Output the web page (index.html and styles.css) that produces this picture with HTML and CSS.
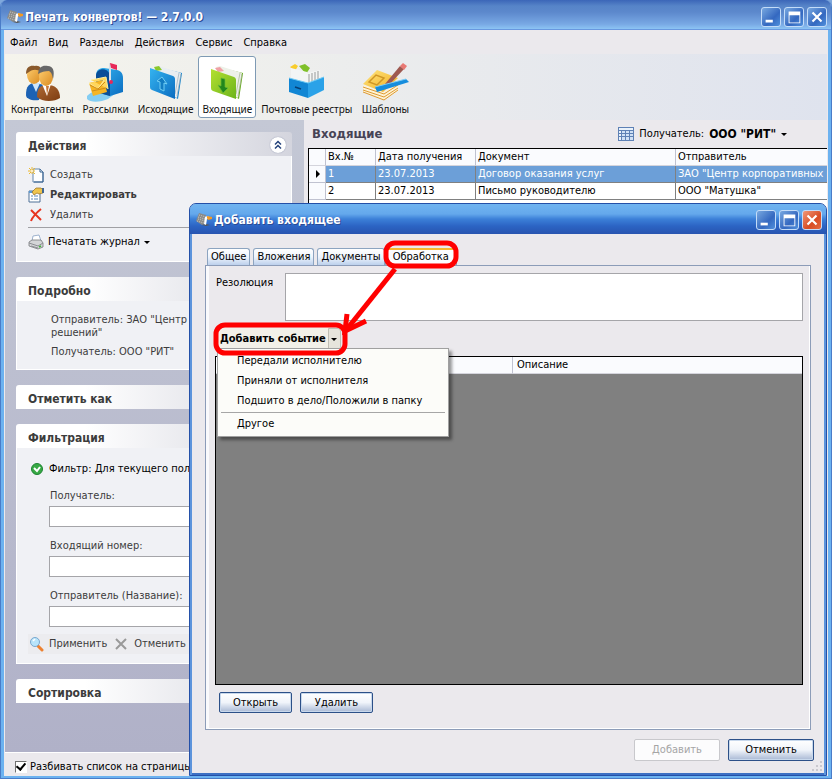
FILE: index.html
```html
<!DOCTYPE html>
<html lang="ru">
<head>
<meta charset="utf-8">
<title>Печать конвертов!</title>
<link rel="stylesheet" href="styles.css">
</head>
<body>
<svg class="defs" aria-hidden="true">
  <defs>
    <linearGradient id="gBlue" x1="0" y1="0" x2="1" y2="1"><stop offset="0" stop-color="#35b4f0"/><stop offset="1" stop-color="#0a6cc0"/></linearGradient>
    <linearGradient id="gGreen" x1="0" y1="0" x2="1" y2="1"><stop offset="0" stop-color="#b4e030"/><stop offset="1" stop-color="#6cb41c"/></linearGradient>
    <linearGradient id="gSkin" x1="0" y1="0" x2="1" y2="1"><stop offset="0" stop-color="#ffcf70"/><stop offset="1" stop-color="#d98a20"/></linearGradient>
    <linearGradient id="gBrown" x1="0" y1="0" x2="1" y2="1"><stop offset="0" stop-color="#b06a34"/><stop offset="1" stop-color="#7c3c12"/></linearGradient>
    <linearGradient id="gYellow" x1="0" y1="0" x2="1" y2="1"><stop offset="0" stop-color="#ffe680"/><stop offset="1" stop-color="#f2ac1c"/></linearGradient>
    <symbol id="app" viewBox="0 0 16 16">
      <path d="M3 1l7 2-1 9-3 1-6-4z" fill="#8a8a88"/>
      <path d="M3 3l7 2M2 5l7 2M2 7l7 2M1 9l7 2" stroke="#d4d4d0" stroke-width=".8" stroke-dasharray="1 1" fill="none"/>
      <path d="M6 13l4-1 4 1-4 1z" fill="#555"/>
      <path d="M9 5l3-1 1 2-2 1-1 6-2-1z" fill="#fff"/>
      <path d="M11 4l5 1v2l-4 1-1-2z" fill="#f59a22"/>
    </symbol>
  </defs>
</svg>

<div class="window">
  <header class="titlebar">
    <svg class="app-icon"><use href="#app"/></svg>
    <h1>Печать конвертов! — 2.7.0.0</h1>
    <div class="controls">
      <button type="button" aria-label="Свернуть"><svg viewBox="0 0 20 20"><path d="M4 13h8v3H4z" fill="#fff"/></svg></button>
      <button type="button" aria-label="Развернуть"><svg viewBox="0 0 20 20"><path d="M4 4h13v13H4zM5 8v8h11V8z" fill="#fff" fill-rule="evenodd"/></svg></button>
      <button type="button" aria-label="Закрыть"><svg viewBox="0 0 20 20"><path d="M5 5l10 10M15 5L5 15" stroke="#fff" stroke-width="2.4"/></svg></button>
    </div>
  </header>

  <nav class="menubar">
    <button type="button">Файл</button><button type="button">Вид</button><button type="button">Разделы</button><button type="button">Действия</button><button type="button">Сервис</button><button type="button">Справка</button>
  </nav>

  <div class="toolbar">
    <button type="button">
      <svg viewBox="0 0 40 40">
        <path d="M4 33c0-9 3-12 10-12l8 2-5 15c-7 1-13-1-13-5z" fill="#1c62b4"/>
        <path d="M10 21l4 9 4-9z" fill="#cfe6fa"/>
        <ellipse cx="12" cy="13" rx="7" ry="9" fill="url(#gSkin)"/>
        <path d="M4 12C4 4 9 3 13 4c5-1 7 3 6 6-4-3-8-3-12 0z" fill="#8a5a2c"/>
        <path d="M15 35c0-10 4-12 11-12s12 4 12 13c-6 4-18 4-23-1z" fill="url(#gBrown)"/>
        <path d="M20 22l5 12 4-12z" fill="#fff"/><path d="M24 24l1 9 2-9z" fill="#c87838"/>
        <ellipse cx="24" cy="15" rx="7" ry="9" fill="url(#gSkin)"/>
        <path d="M16 12C17 4 21 3 26 4c5 0 7 5 5 13-1-4-1-6-4-8-4 0-8 1-11 3z" fill="#686868"/>
      </svg>
      <span>Контрагенты</span>
    </button>
    <button type="button">
      <svg viewBox="0 0 40 40">
        <path d="M1 34c4-3 10-8 16-7l13 4-8 6c-7 3-17 4-21 0z" fill="#84cdf2"/>
        <path d="M10 24V14c0-6 3-8 8-8l13 2c5 1 6 5 6 8v14l-13 4-14-4z" fill="url(#gBlue)"/>
        <path d="M10 24V14c0-9 14-9 14 1v19l-14-4z" fill="#0a4e98"/>
        <path d="M3 21l15-3 3 12-14 4z" fill="#f5b525"/>
        <path d="M3 21l9 6 6-9M5 18l15-3 2 12" stroke="#fff0a0" fill="#ffd65c" stroke-width="1"/>
        <path d="M4 23l8 4 7-7M6 29l14-3" stroke="#cf8c18" fill="none"/>
        <path d="M24 20V1" stroke="#d8e0e8" stroke-width="2"/><path d="M24 1l7 2v5l-6-2z" fill="#e82858"/><circle cx="25" cy="20" r="2" fill="#e82858"/>
      </svg>
      <span>Рассылки</span>
    </button>
    <button type="button">
      <svg viewBox="0 0 40 40">
        <path d="M11 5l25 6-4 26-16-9z" fill="#1584cc"/>
        <path d="M9 5l4-1 22 7-4 25-17-9z" fill="#e8edf1"/><path d="M8 5l5-1 3 4-6 1z" fill="#8ac82c"/>
        <path d="M31 34l4-22M29 32l4-21" stroke="#9aaab8" stroke-width=".7"/>
        <path d="M4 6l23 8c2 1 2 2 2 4v19L6 28c-2-1-2-2-2-4z" fill="url(#gBlue)"/>
        <path d="M16 15l5 7-3-1v8l-4-2v-7l-3-1z" fill="#127cc2" stroke="#71cef4"/>
      </svg>
      <span>Исходящие</span>
    </button>
    <button type="button" class="selected">
      <svg viewBox="0 0 40 40">
        <path d="M11 5l25 6-4 26-16-9z" fill="#67ac1c"/>
        <path d="M9 5l4-1 22 7-4 25-17-9z" fill="#edf1e8"/><path d="M8 6l5-1 4 4-6 1z" fill="#f0a0a4"/>
        <path d="M31 34l4-22M29 32l4-21" stroke="#a0b094" stroke-width=".7"/>
        <path d="M4 7l23 8c2 1 2 2 2 4v18L6 29c-2-1-2-2-2-4z" fill="url(#gGreen)"/>
        <path d="M14 16l4 1v8l3 1-5 5-5-8 3 1z" fill="#21871c" stroke="#68b938" stroke-width=".7"/>
      </svg>
      <span>Входящие</span>
    </button>
    <button type="button">
      <svg viewBox="0 0 40 40">
        <path d="M3 5l5-3 3 2-3 5z" fill="#f8cc2c"/><path d="M12 4l6-2 5 4-4 6z" fill="#7fc029"/>
        <path d="M4 6l16 4v14H4z" fill="#f3f5f5"/>
        <path d="M20 11l13-3 1 13-14 9z" fill="#f4f5f4"/><path d="M22 12v13M25 11v12M28 10v10M31 9v10" stroke="#979a9a"/>
        <path d="M2 16l19 5v15L2 30z" fill="#1186d4"/><path d="M21 21l16-6v13l-16 8z" fill="#2ba2e8"/>
        <path d="M2 16l19 5 16-6" stroke="#70cbf4" fill="none"/><path d="M8 25l6 2" stroke="#063f74" stroke-width="1.5"/>
      </svg>
      <span>Почтовые реестры</span>
    </button>
    <button type="button">
      <svg class="wide" viewBox="0 0 48 40">
        <path d="M2 23l21 7 14-9v8L23 38 2 30z" fill="#fff3d4"/>
        <path d="M2 25l21 7 14-9M2 28l21 7 14-9M2 30l21 8 14-10" stroke="#dd9a34" fill="none"/>
        <path d="M2 22L16 8l21 8-15 14z" fill="url(#gYellow)"/>
        <path d="M8 20l7-7 8 3-7 7z" fill="none" stroke="#d09724" stroke-width="1.5"/>
        <path d="M24 22l15-18 4 3-15 16-4 2z" fill="#9e5950"/><path d="M39 4l3-3 4 3-3 4z" fill="#e87974"/>
        <path d="M14 25l31-8 3 3-32 10z" fill="#168ddd"/><path d="M14 25l31-8" stroke="#7dccf4"/>
      </svg>
      <span>Шаблоны</span>
    </button>
  </div>

  <div class="body">
    <aside class="sidebar">
      <section class="panel">
        <h2>Действия
          <button type="button" class="collapse" aria-label="Свернуть раздел"><svg viewBox="0 0 16 16"><path d="M5 7.500l3-3 3 3M5 11.500l3-3 3 3" fill="none" stroke="#24427c" stroke-width="1.500"/></svg></button>
        </h2>
        <div class="panel-body actions">
          <button type="button">
            <svg viewBox="0 0 16 16"><path d="M5 2h7l3 3v10H5z" fill="#fdfeff" stroke="#6587ad"/><path d="M12 2v3h3M15 5v10H6" fill="none" stroke="#35608f"/><path d="M4 0v7M0 4h7M1 1l6 6M7 1L1 7" stroke="#edb92e"/><circle cx="4" cy="4" r="1" fill="#fff"/></svg>
            <span>Создать</span></button>
          <button type="button" class="strong">
            <svg viewBox="0 0 16 16"><path d="M1 4h11v11H1z" fill="#fff" stroke="#4e7197"/><path d="M1 4h11v2H1z" fill="#5a9ad5"/><path d="M3 9h2M6 9h4M3 12h2M6 12h4" stroke="#5a87b8"/><path d="M4 5l4-4 5 0 2 2v3l-4 1-2-1-3 2z" fill="#eec44d" stroke="#936b20" stroke-width=".7"/><path d="M14 1h2v5h-2z" fill="#426791"/></svg>
            <span>Редактировать</span></button>
          <button type="button">
            <svg viewBox="0 0 16 16"><path d="M3 3c3 3 6 6 10 10M13 2C8 6 5 9 3 14" stroke="#e73520" stroke-width="2" fill="none"/></svg>
            <span>Удалить</span></button>
          <hr>
          <button type="button" class="dark">
            <svg viewBox="0 0 16 16"><path d="M4 7l1-5 6-1 2 6z" fill="#fff" stroke="#7895bb" stroke-width=".7"/><path d="M1 8l3-2h9l2 3v4l-5 2-9-3z" fill="#d4d5d7" stroke="#77797c" stroke-width=".8"/><path d="M1 9l9 3 5-3M3 12l7 2" stroke="#8b8d92" fill="none"/><path d="M11 13l2-1" stroke="#43b53b" stroke-width="1.500"/></svg>
            <span>Печатать журнал</span><i class="caret"></i></button>
        </div>
      </section>

      <section class="panel">
        <h2>Подробно</h2>
        <div class="panel-body details">
          <p>Отправитель: ЗАО "Центр корпоративных решений"</p>
          <p>Получатель: ООО "РИТ"</p>
        </div>
      </section>

      <section class="panel"><h2>Отметить как</h2></section>

      <section class="panel">
        <h2>Фильтрация</h2>
        <div class="panel-body filter">
          <p class="filter-state">
            <svg viewBox="0 0 16 16"><circle cx="9" cy="8" r="5.500" fill="#37a944" stroke="#1d8432"/><path d="M6 7l3 3 3-4" fill="none" stroke="#fff" stroke-width="2"/></svg>
            <span>Фильтр: Для текущего получателя</span></p>
          <label for="recipient">Получатель:</label><input id="recipient" type="text">
          <label for="number">Входящий номер:</label><input id="number" type="text">
          <label for="sender">Отправитель (Название):</label><input id="sender" type="text">
          <div class="filter-buttons">
            <button type="button"><svg viewBox="0 0 16 16"><path d="M10 10l4 4" stroke="#ed8130" stroke-width="3" stroke-linecap="round"/><circle cx="7" cy="6" r="4.500" fill="#b8e4fa" stroke="#7ba8cf"/><path d="M5 5l2-2" stroke="#fff" stroke-width="1.500"/></svg><span>Применить</span></button>
            <button type="button"><svg viewBox="0 0 16 16"><path d="M3 3l10 10M13 3L3 13" stroke="#999" stroke-width="2"/></svg><span>Отменить</span></button>
          </div>
        </div>
      </section>

      <section class="panel"><h2>Сортировка</h2></section>
    </aside>

    <main class="content">
      <div class="content-head">
        <h2>Входящие</h2>
        <button type="button" class="recipient-pick">
          <svg viewBox="0 0 16 14"><path d="M0 0h16v14H0z" fill="#5e81b5"/><path d="M1 1h14v2H1zM1 4h2v2H1zM1 7h2v2H1zM1 10h2v3H1z" fill="#eaf2fb"/><path d="M4 4h3v2H4zM8 4h3v2H8zM12 4h3v2h-3zM4 7h3v2H4zM8 7h3v2H8zM12 7h3v2h-3zM4 10h3v3H4zM8 10h3v3H8zM12 10h3v3h-3z" fill="#cfe0f5"/></svg>
          <span>Получатель:</span><strong>ООО "РИТ"</strong><i class="caret"></i>
        </button>
      </div>
      <div class="list">
        <table>
          <colgroup><col class="c-mark"><col class="c-num"><col class="c-date"><col class="c-doc"><col></colgroup>
          <thead><tr><th></th><th>Вх.№</th><th>Дата получения</th><th>Документ</th><th>Отправитель</th></tr></thead>
          <tbody>
            <tr class="current"><td><i class="row-mark"></i></td><td>1</td><td>23.07.2013</td><td>Договор оказания услуг</td><td>ЗАО "Центр корпоративных решений"</td></tr>
            <tr><td></td><td>2</td><td>23.07.2013</td><td>Письмо руководителю</td><td>ООО "Матушка"</td></tr>
          </tbody>
        </table>
      </div>
    </main>
  </div>

  <footer class="statusbar">
    <input type="checkbox" id="paging" checked><label for="paging">Разбивать список на страницы</label>
  </footer>
</div>

<section class="dialog" role="dialog" aria-labelledby="dlg-title">
  <header class="titlebar">
    <svg class="app-icon"><use href="#app"/></svg>
    <h1 id="dlg-title">Добавить входящее</h1>
    <div class="controls">
      <button type="button" aria-label="Свернуть"><svg viewBox="0 0 20 20"><path d="M4 13h8v3H4z" fill="#fff"/></svg></button>
      <button type="button" aria-label="Развернуть"><svg viewBox="0 0 20 20"><path d="M4 4h13v13H4zM5 8v8h11V8z" fill="#fff" fill-rule="evenodd"/></svg></button>
      <button type="button" class="close" aria-label="Закрыть"><svg viewBox="0 0 20 20"><path d="M5 5l10 10M15 5L5 15" stroke="#fff" stroke-width="2.400"/></svg></button>
    </div>
  </header>
  <div class="dialog-body">
    <div class="tabs" role="tablist">
      <button type="button" role="tab">Общее</button><button type="button" role="tab">Вложения</button><button type="button" role="tab">Документы</button><button type="button" role="tab" aria-selected="true" class="active">Обработка</button>
    </div>
    <div class="tab-page">
      <div class="field"><label for="resolution">Резолюция</label><textarea id="resolution"></textarea></div>
      <div class="split">
        <button type="button" class="add">Добавить событие</button><button type="button" class="arrow" aria-label="Выбрать событие"><i class="caret"></i></button>
        <div class="menu" role="menu">
          <button type="button" role="menuitem">Передали исполнителю</button>
          <button type="button" role="menuitem">Приняли от исполнителя</button>
          <button type="button" role="menuitem">Подшито в дело/Положили в папку</button>
          <hr>
          <button type="button" role="menuitem">Другое</button>
        </div>
      </div>
      <div class="events">
        <table><colgroup><col class="c-event"><col></colgroup><thead><tr><th></th><th>Описание</th></tr></thead></table>
      </div>
      <div class="row-buttons"><button type="button" class="btn">Открыть</button><button type="button" class="btn">Удалить</button></div>
    </div>
    <div class="dialog-buttons"><button type="button" class="btn" disabled>Добавить</button><button type="button" class="btn">Отменить</button></div>
  </div>
  <svg class="grip" viewBox="0 0 12 12" aria-hidden="true"><path d="M9 1h2v2H9zM9 5h2v2H9zM5 5h2v2H5zM9 9h2v2H9zM5 9h2v2H5zM1 9h2v2H1z" fill="#c9c8cf"/></svg>
  <svg class="marks" viewBox="0 0 260 130" aria-hidden="true">
    <g fill="none" stroke="#f00" stroke-width="5" stroke-linejoin="round">
      <rect x="180" y="8" width="70" height="23" rx="9"/>
      <rect x="10" y="90" width="129" height="28" rx="9"/>
      <path d="M189 34L141 94"/><path d="M141 79l-2 17 21-10" stroke-linejoin="miter"/>
    </g>
  </svg>
</section>
</body>
</html>
```
FILE: styles.css
```css
* { box-sizing: border-box; }
html, body { height: 100%; }
body {
  margin: 0;
  overflow: hidden;
  position: relative;
  background: #7fa8dc;
  color: #000;
  font-family: "DejaVu Sans Condensed", "DejaVu Sans", sans-serif;
  font-size: 11px;
  line-height: 14px;
}
h1, h2, p { margin: 0; }
button { font: inherit; color: inherit; background: none; border: 0; padding: 0; margin: 0; }
input, textarea { font: inherit; margin: 0; }
svg { display: block; flex: none; }
.defs { position: absolute; width: 0; height: 0; }
.caret { border: 3px solid transparent; border-top-color: currentColor; border-bottom: 0; }

/* Main window */
.window {
  display: flex;
  flex-direction: column;
  height: 100%;
  background: #ebe9ed;
  border: 1px solid #4a7cc8;
  border-width: 0 1px 1px;
  border-radius: 7px 7px 0 0;
  box-shadow: inset 3px 0 #6cb2f0, inset -3px 0 #6cb2f0, inset 0 -2px #6cb2f0;
  padding: 0 4px 2px;
  overflow: hidden;
}
.titlebar { display: flex; align-items: center; flex: none; height: 30px; }
.window > .titlebar {
  margin: 0 -4px;
  padding: 3px 4px 0 6px;
  background: linear-gradient(#3b66b8, #5684c8 6px, #5c88cc 12px, #78a8e4 24px, #8cc4f4 29px, #6898e0 29px);
}
.app-icon { width: 16px; height: 16px; }
.titlebar h1 { flex: 1; margin-left: 2px; font-size: 12px; line-height: 16px; color: #fff; text-shadow: 1px 1px #2a4b96; white-space: nowrap; }
.controls { display: flex; gap: 3px; }
.controls button {
  width: 20px;
  height: 20px;
  border: 1px solid #c4dcf8;
  border-radius: 3px;
  background: linear-gradient(135deg, #78a8e0, #3468c0 60%, #5090dc);
}
.controls svg { width: 18px; height: 18px; }
.controls .close { background: linear-gradient(135deg, #f09878, #d84c24 60%, #e46c44); }

.menubar { display: flex; align-items: center; flex: none; height: 24px; padding: 1px 0 0 5px; gap: 11px; }
.toolbar {
  display: flex;
  align-items: flex-start;
  flex: none;
  gap: 1px;
  height: 66px;
  padding: 2px;
  background: linear-gradient(90deg, #f5f4ec, #dfe3ee);
}
.toolbar button {
  display: flex;
  flex-direction: column;
  align-items: center;
  height: 62px;
  padding: 5px 3px 0;
  border: 1px solid transparent;
  border-radius: 3px;
  color: #111;
  font-family: "Noto Sans", "Open Sans", sans-serif;
  font-size: 10px;
  white-space: nowrap;
}
.toolbar .selected { background: #fff; border-color: #7e9ab4; }
.toolbar svg { width: 40px; height: 40px; }
.toolbar svg.wide { width: 48px; }

.body { display: flex; flex: 1; min-height: 0; }
.sidebar {
  display: flex;
  flex-direction: column;
  flex: none;
  width: 299px;
  gap: 15px;
  padding: 12px 12px 0 11px;
  background: linear-gradient(#c4c8d5, #b0b1c8);
  border-bottom: 1px solid #fff;
  color: #3c3c3c;
}
.panel h2 {
  display: flex;
  align-items: center;
  justify-content: space-between;
  height: 24px;
  padding: 3px 6px 0 12px;
  border-radius: 3px 3px 0 0;
  background: linear-gradient(90deg, #fff 25%, #d4d5de);
  font-size: 12px;
  line-height: 16px;
}
.collapse { width: 16px; height: 16px; margin-top: -2px; border-radius: 50%; background: #fff; box-shadow: 0 0 1px #6c7696; }
.panel-body { background: #f0f1f5; border: 1px solid #fff; border-top: 0; }
.actions { padding: 9px 11px 9px; }
.actions button { display: flex; align-items: center; gap: 6px; height: 20px; }
.actions svg, .filter svg { width: 16px; height: 16px; }
.actions .strong { font-weight: bold; }
.actions .dark, .filter-state { color: #000; }
.actions .dark { gap: 4px; }
.actions hr { height: 1px; margin: 2px 0 4px; border: 0; background: #a0a0a4; }
.details { padding: 12px 6px 11px 34px; line-height: 13px; }
.details p + p { margin-top: 6px; }
.filter { padding: 11px 11px 9px; }
.filter-state { display: flex; align-items: center; gap: 5px; height: 20px; margin-bottom: 10px; white-space: nowrap; }
.filter label { display: block; margin-left: 22px; }
.filter input { display: block; width: 222px; height: 21px; margin: 3px 0 12px 21px; border: 1px solid #a5a5a9; background: #fff; }
.filter-buttons { display: flex; gap: 6px; height: 20px; margin-top: -5px; background: #ececef; }
.filter-buttons button { display: flex; align-items: center; gap: 5px; }

.content { display: flex; flex-direction: column; flex: 1; min-width: 0; padding-left: 4px; }
.content-head { display: flex; align-items: center; justify-content: space-between; height: 28px; padding: 0 40px 0 4px; }
.content-head h2 { font-size: 13px; line-height: 16px; color: #474355; }
.recipient-pick { display: flex; align-items: center; gap: 5px; }
.recipient-pick svg { width: 16px; height: 14px; }
.recipient-pick strong { font-size: 12px; }
.list { flex: 1; min-height: 0; overflow: hidden; background: #fff; border: 1px solid #000; border-width: 1px 0 0 1px; }
table { width: 100%; table-layout: fixed; border-collapse: separate; border-spacing: 0; }
th, td { height: 17px; padding: 0 2px; overflow: hidden; white-space: nowrap; text-align: left; font-weight: normal; }
th { background: #fafbfe; border-right: 1px solid #c0c2d0; border-bottom: 1px solid #d4d4dc; }
td { border-right: 1px solid #808080; border-bottom: 1px solid #808080; }
td:first-child { background: #fafbfe; border-color: #c0c2d0; }
th:last-child, td:last-child { border-right: 0; }
.c-mark { width: 17px; }
.c-num { width: 50px; }
.c-date { width: 100px; }
.c-doc { width: 200px; }
.current td + td { background: #6c9fd8; color: #fff; }
.row-mark { display: block; width: 0; margin-left: 5px; border: 4px solid transparent; border-left-color: #000; border-right: 0; }
.statusbar { display: flex; align-items: center; flex: none; height: 23px; padding: 4px 10px 0; gap: 3px; }
.statusbar input { width: 12px; height: 12px; appearance: none; border: 1px solid #404040; border-color: #707070 #fff #fff #707070; background: #fff; display: grid; place-items: center; }
.statusbar input:checked::before { content: ""; width: 4px; height: 7px; margin-top: -2px; border: solid #000; border-width: 0 2px 2px 0; transform: rotate(40deg); }

/* Dialog floating above the main window */
.dialog {
  position: absolute;
  left: 189px;
  right: 5px;
  top: 203px;
  bottom: 3px;
  display: flex;
  flex-direction: column;
  padding: 0 3px 3px;
  border: 1px solid #2450a8;
  border-radius: 7px 7px 0 0;
  background: #ebe9ed;
  box-shadow: inset 2px 0 #5c94dc, inset -2px 0 #5c94dc, inset 0 -2px #3c70c4;
}
.dialog > .titlebar {
  margin: 0 -3px;
  padding: 2px 4px 0 6px;
  border-radius: 6px 6px 0 0;
  background: linear-gradient(#70b4f0, #64a8ec 10px, #3c80d8 15px, #2c64c4 22px, #2854b0);
}
.dialog-body { display: flex; flex-direction: column; flex: 1; min-height: 0; padding: 14px 12px 11px; }
.tabs { display: flex; align-items: flex-end; height: 17px; padding-left: 2px; gap: 3px; }
.tabs button {
  height: 17px;
  padding: 0 3px;
  border: 1px solid #8ca4c0;
  border-bottom: 0;
  border-radius: 3px 3px 0 0;
  background: linear-gradient(#fff, #eef4fc 50%, #bcd0ec);
}
.tabs .active { height: 18px; margin-left: -3px; padding: 0 7px 3px; align-self: flex-start; background: #fcfcfe; border-top: 2px solid #f8b830; }
.tab-page { display: flex; flex-direction: column; flex: 1; min-height: 0; padding: 7px 7px 16px 9px; border: 1px solid #8c9cb8; box-shadow: inset 3px 0 #fafafc, inset -1px -1px #fff; }
.field { display: flex; }
.field label { width: 70px; padding: 3px 0 0 1px; }
.field textarea { flex: 1; height: 48px; border: 1px solid #a5a5a9; background: #fff; resize: none; }
.split { position: relative; display: flex; align-self: flex-start; height: 22px; margin: 7px 0 6px 2px; background: #f2f0e8; border-radius: 3px; }
.split .add { padding: 0 2px 0 3px; font-weight: bold; white-space: nowrap; }
.split .arrow { display: flex; align-items: center; justify-content: center; width: 13px; border: 1px solid #c0beb4; border-radius: 0 3px 3px 0; background: #e6e4dc; }
.menu {
  position: absolute;
  left: 0;
  top: 20px;
  z-index: 1;
  display: flex;
  flex-direction: column;
  width: 232px;
  padding: 2px 3px;
  background: #fcfcf9;
  border: 1px solid #a0a0a0;
  box-shadow: 3px 3px 3px rgba(0, 0, 0, .4);
}
.menu button { height: 20px; padding-left: 16px; text-align: left; white-space: nowrap; }
.menu hr { width: 100%; height: 1px; margin: 1px 0; border: 0; background: #a6a6a6; }
.events { flex: 1; min-height: 0; background: #808080; border: 1px solid #000; }
.events th { padding-left: 4px; }
.c-event { width: 297px; }
.row-buttons { display: flex; gap: 8px; margin: 7px 0 0 4px; }
.dialog-buttons { display: flex; justify-content: flex-end; gap: 8px; margin: 9px -3px 0 0; }
.btn { width: 73px; height: 21px; border: 1px solid #2c5088; border-radius: 2px; background: linear-gradient(#fff, #f0f4fa 50%, #a8b8d4); box-shadow: inset 0 0 0 1px #c8d8ec; }
.dialog-buttons .btn { width: 86px; height: 22px; }
.btn:disabled { color: #a5a5a5; border-color: #c8c8cc; background: #fcfcfd; box-shadow: none; }
.grip { position: absolute; right: 3px; bottom: 3px; width: 12px; height: 12px; }
.marks { position: absolute; left: 16px; top: 31px; z-index: 2; width: 260px; height: 130px; pointer-events: none; }
```
